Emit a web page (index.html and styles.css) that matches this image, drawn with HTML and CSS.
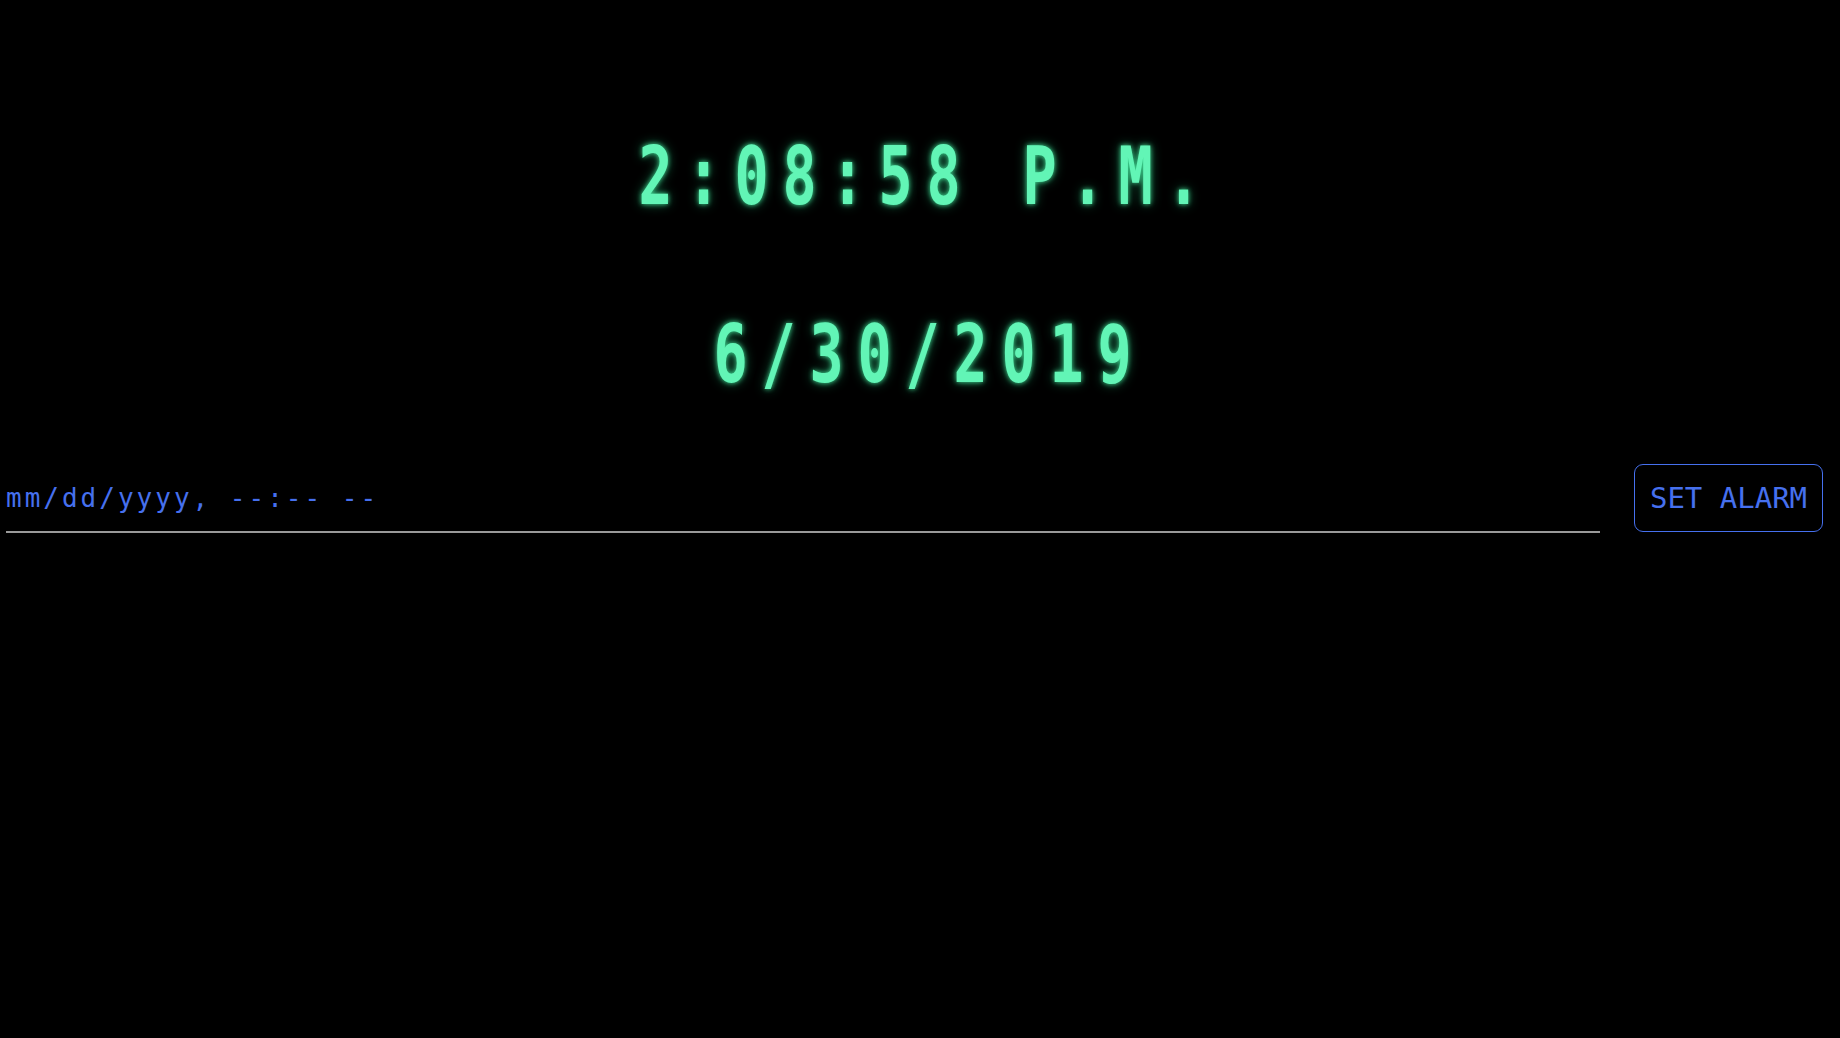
FILE: index.html
```html
<!DOCTYPE html>
<html lang="en">
<head>
<meta charset="utf-8">
<title>Clock</title>
<link rel="stylesheet" href="styles.css">
</head>
<body>
<main class="page">
  <div class="row clock-row"><span class="digits clock">2:08:58 P.M.</span></div>
  <div class="row date-row"><span class="digits date">6/30/2019</span></div>
  <form class="alarm">
    <input class="alarm-input" type="text" placeholder="mm/dd/yyyy, --:-- --">
    <button class="alarm-btn" type="button">SET ALARM</button>
  </form>
</main>
</body>
</html>
```

FILE: styles.css
```css
html, body {
  margin: 0;
  padding: 0;
  background: #000;
}
body {
  font-family: "DejaVu Sans Mono", "Liberation Mono", monospace;
  color: #62f5b6;
  width: 1840px;
  height: 1038px;
  overflow: hidden;
}
.page {
  display: flex;
  flex-direction: column;
  padding: 0 17px 0 6px;
}
.row {
  display: flex;
  justify-content: center;
}
.digits {
  display: inline-block;
  font-size: 81px;
  font-weight: bold;
  line-height: 1;
  letter-spacing: 19.8px;
  transform: scaleX(0.7);
  transform-origin: center;
  white-space: nowrap;
  text-shadow: 0 0 6px rgba(70, 235, 160, 0.9), 0 0 14px rgba(40, 200, 130, 0.55);
}
.clock-row {
  margin-top: 136px;
  height: 81px;
}
.clock {
  margin-left: 23px;
}
.date-row {
  margin-top: 97px;
  height: 81px;
}
.date {
  margin-left: 30px;
}
.alarm {
  display: flex;
  align-items: flex-end;
  gap: 34px;
  margin-top: 69px;
}
.alarm-input {
  flex: 1;
  box-sizing: content-box;
  height: 30px;
  padding: 0 0 18px 0;
  margin: 0;
  border: none;
  border-bottom: 2px solid #9a9a9a;
  background: transparent;
  font-family: "DejaVu Sans Mono", monospace;
  font-size: 26px;
  letter-spacing: 3px;
  color: #4670ee;
  outline: none;
}
.alarm-input::placeholder {
  color: #4670ee;
  opacity: 1;
}
.alarm-btn {
  width: 189px;
  height: 68px;
  box-sizing: border-box;
  margin: 0 0 1px 0;
  padding: 0;
  background: #000;
  border: 1px solid #4670ee;
  border-radius: 9px;
  color: #4670ee;
  font-family: "DejaVu Sans Mono", monospace;
  font-size: 29px;
  cursor: pointer;
}
```
